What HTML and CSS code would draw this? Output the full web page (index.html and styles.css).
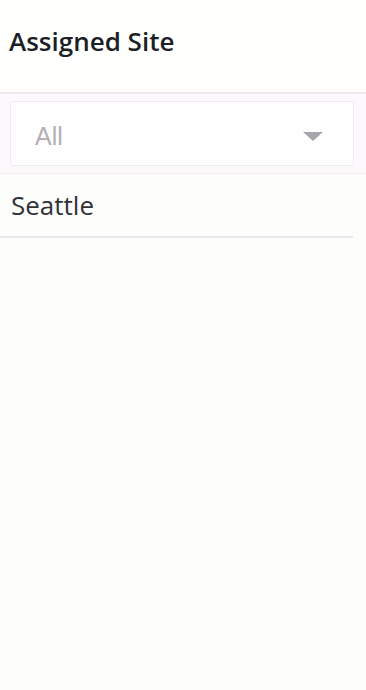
FILE: index.html
```html
<!DOCTYPE html>
<html>
<head>
<meta charset="utf-8">
<link rel="stylesheet" href="styles.css">
</head>
<body>
<div class="page">
  <header class="header">
    <h1 class="title">Assigned Site</h1>
  </header>
  <div class="filter">
    <div class="select">
      <span class="select-value">All</span>
      <svg class="caret" width="20" height="9" viewBox="0 0 20 9"><path d="M0 0 L20 0 L10 9 Z" fill="#a8a6aa"/></svg>
    </div>
  </div>
  <ul class="list">
    <li class="list-item">Seattle</li>
  </ul>
</div>
</body>
</html>
```
FILE: styles.css
```css
html, body {
  margin: 0;
  padding: 0;
  background: #fdfdfb;
}
body {
  font-family: "Open Sans", "Liberation Sans", sans-serif;
  width: 366px;
  height: 690px;
}
.page {
  display: flex;
  flex-direction: column;
}
.header {
  height: 94px;
  display: flex;
  align-items: center;
  padding: 0 0 10px 9px;
  background: #fffffe;
  border-bottom: 2px solid #ede9ef;
  box-sizing: border-box;
}
.title {
  margin: 0;
  font-size: 26px;
  font-weight: 600;
  color: #1d1f26;
}
.filter {
  background: #fcf9fc;
  padding: 7px 12px 7px 10px;
  border-bottom: 1px solid #f4eff4;
}
.select {
  height: 65px;
  box-sizing: border-box;
  background: #fffeff;
  border: 1px solid #f0ecf0;
  border-radius: 3px;
  display: flex;
  align-items: center;
  justify-content: space-between;
  padding: 5px 30px 0 24px;
}
.select-value {
  font-family: "Liberation Sans", Arial, sans-serif;
  font-size: 25px;
  color: #b2b0b4;
}
.caret {
  display: block;
}
.list {
  list-style: none;
  margin: 0;
  padding: 0;
}
.list-item {
  height: 62px;
  display: flex;
  align-items: center;
  padding-left: 11px;
  margin-right: 13px;
  font-size: 26px;
  color: #313238;
  border-bottom: 2px solid #ebe7ec;
}
```
